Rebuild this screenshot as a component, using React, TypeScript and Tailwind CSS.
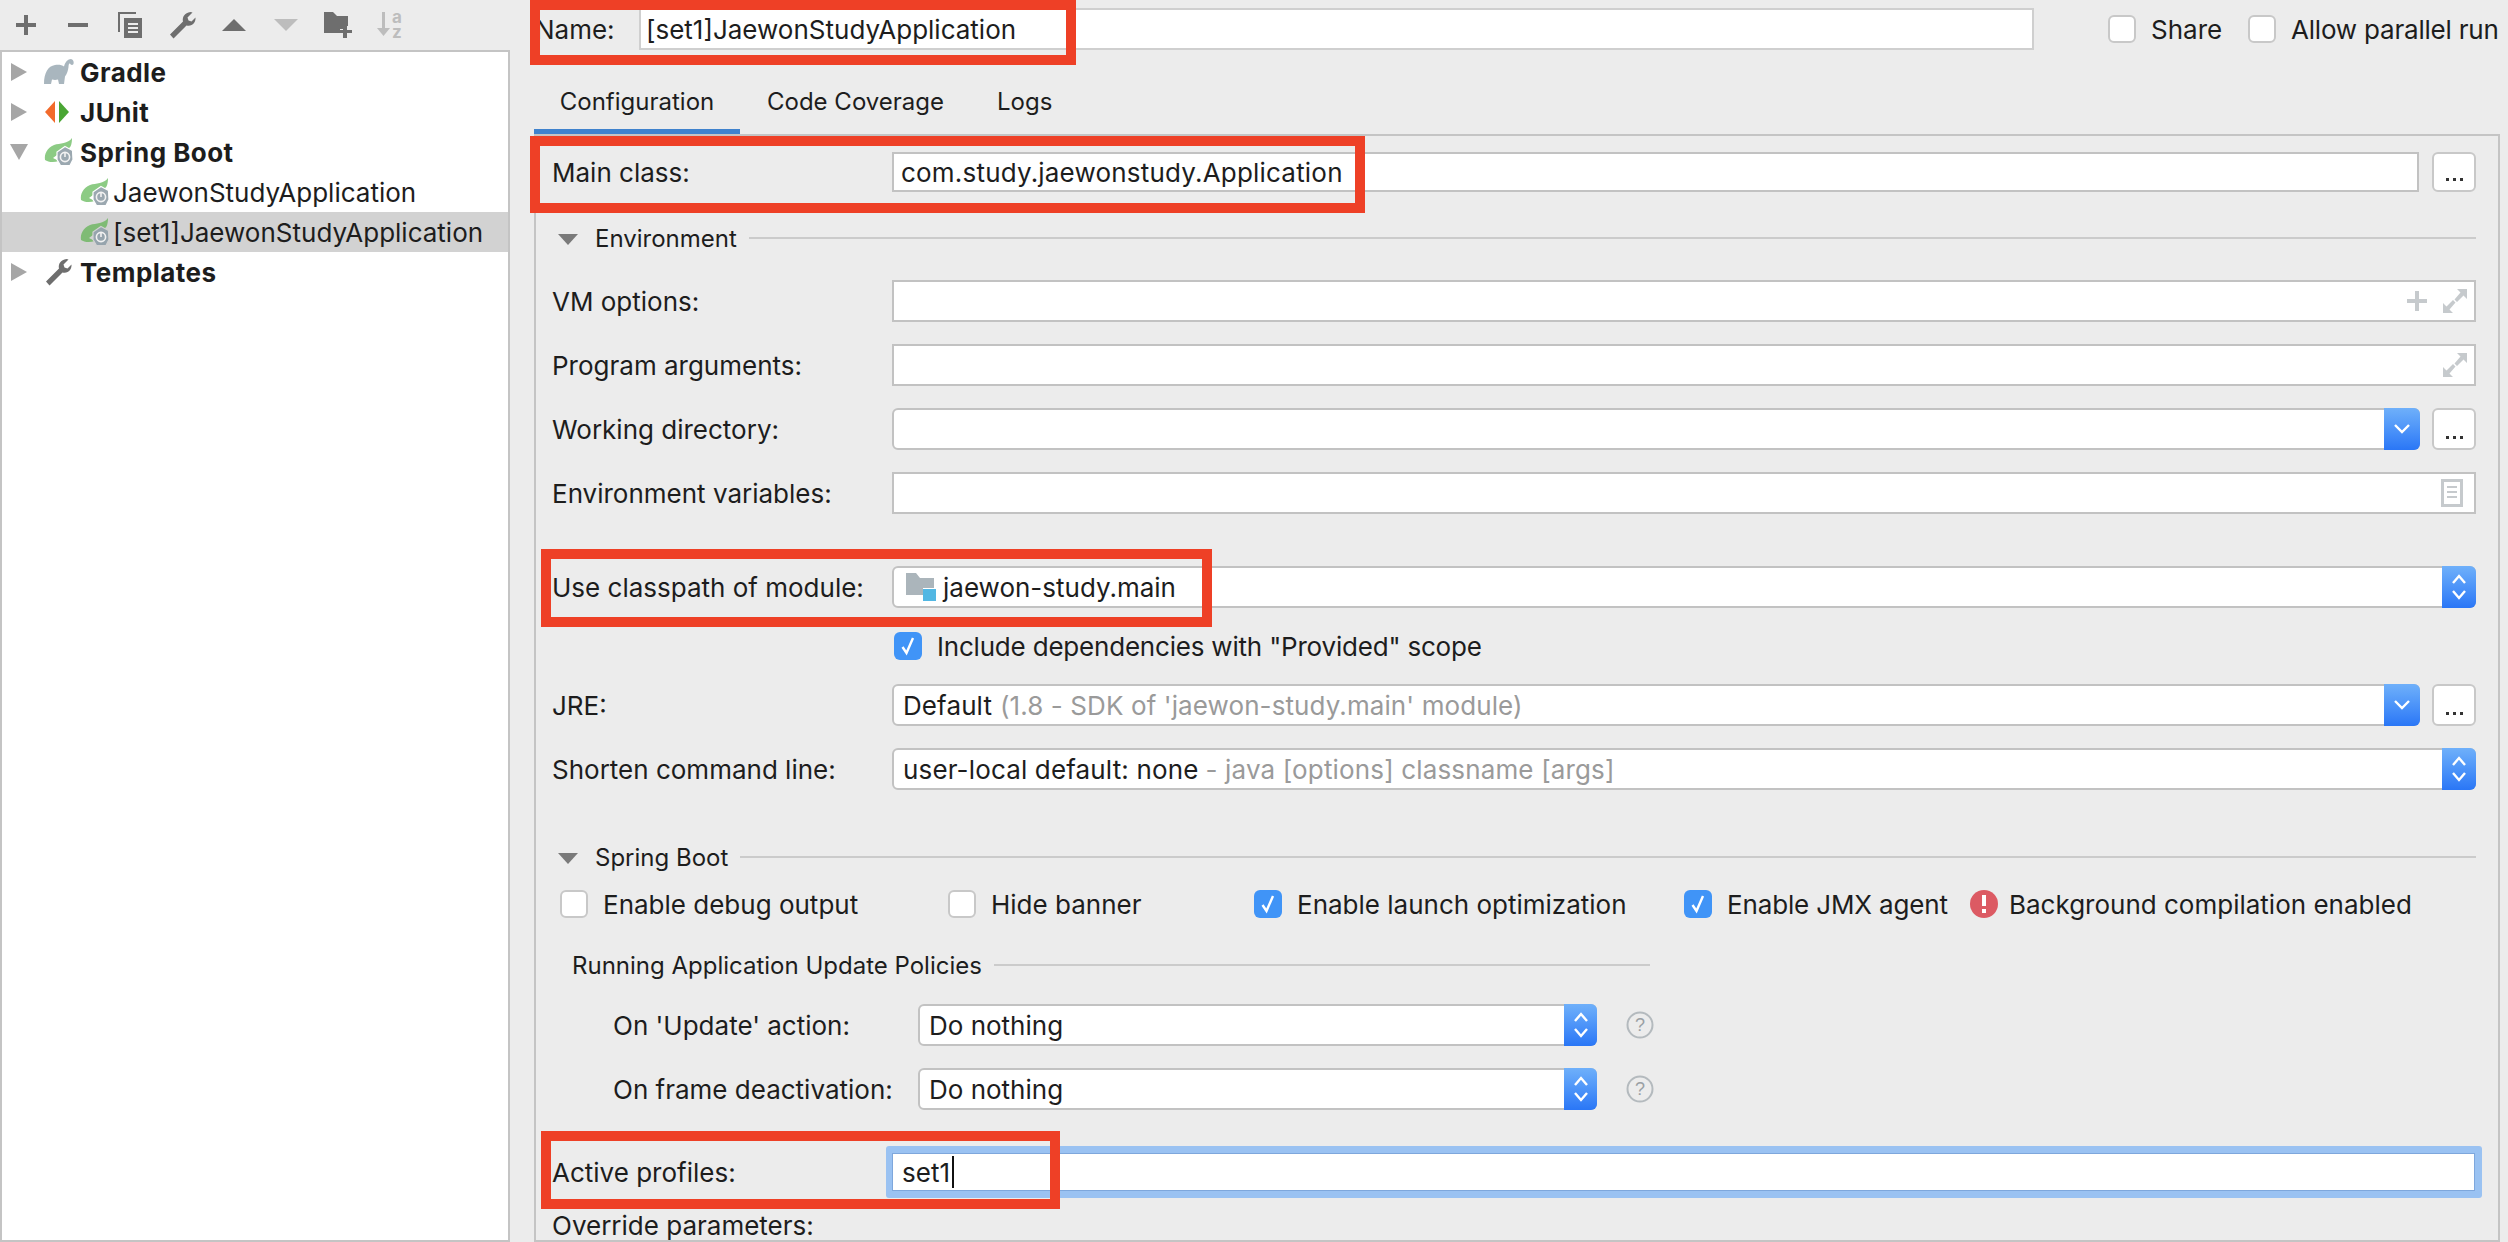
import React from "react";

const Wrench = ({ c = "#6e6e6e", s = 28 }: { c?: string; s?: number }) => (
  <svg width={s} height={s} viewBox="0 0 28 28">
    <path fill={c} d="M2 23.5 L15 10.5 C14 6.5 16.5 1.5 22.5 1 L24.5 1.5 L19.5 6.5 L20.5 9.5 L23.5 10.5 L27.5 6.5 C28 11.5 24 16 18.5 14.5 L5.5 27.5 Z" />
  </svg>
);

const Leaf = ({ dark = false }: { dark?: boolean }) => (
  <svg width="30" height="30" viewBox="0 0 30 30">
    <path fill={dark ? "#7fbb75" : "#8ccb84"} d="M28 1 C28 6 27 10 25 11 C20 12 15 14 13 18 L9 21 L15 24 C9 26 4 25 1 23 C0 17 3 11 10 8 C16 6 24 7 28 1 Z" />
    <path fill={dark ? "#96a4ad" : "#9ba8b0"} stroke={dark ? "#d2d2d2" : "#ffffff"} strokeWidth="1.2" d="M21 9.5 L28.5 13.5 L29 22.5 L26 28.5 L16.5 28.5 L13 22.5 L13 15 Z" />
    <circle cx="21" cy="20" r="4.6" fill="none" stroke="#f2f2f2" strokeWidth="1.6" />
    <path d="M21 15 V20" stroke="#f2f2f2" strokeWidth="1.6" />
  </svg>
);

const Elephant = () => (
  <svg width="30" height="26" viewBox="0 0 30 26">
    <path fill="#a9b6be" d="M0 25 C0 14 4 7 11 6 C15 5.5 18 6 20 7.5 C21 3 24 0 27 0 C29.5 0.5 30 3 29.5 5 C28.5 6.5 26.5 6 26 4.5 C25 4 24.5 6 24.5 8 C24 12 23 15 21 17.5 L20 25 L15 25 L14 20.5 C12 21 10 21 8 20.5 L7 25 L2.5 25 Z" />
  </svg>
);

const JUnit = () => (
  <svg width="26" height="24" viewBox="0 0 26 24">
    <path fill="#f26a2b" d="M11 1 V23 L1 12 Z" />
    <path fill="#4aa634" d="M15 1 V23 L25 12 Z" />
  </svg>
);

const Arrow = ({ open = false }: { open?: boolean }) => (
  <svg width="18" height="18" viewBox="0 0 18 18" className="shrink-0">
    {open ? <path fill="#a6a6a6" d="M0 1 H18 L9 17 Z" /> : <path fill="#a6a6a6" d="M1 0 L17 9 L1 18 Z" />}
  </svg>
);

const tb = "w-[52px] h-full flex items-center justify-center";

const Toolbar = () => (
  <div className="h-[50px] flex items-center">
    <div className={tb}>
      <svg width="20" height="20" viewBox="0 0 20 20"><path fill="#6e6e6e" d="M8 0 H12 V8 H20 V12 H12 V20 H8 V12 H0 V8 H8 Z" /></svg>
    </div>
    <div className={tb}>
      <svg width="20" height="4" viewBox="0 0 20 4"><path fill="#6e6e6e" d="M0 0 H20 V4 H0 Z" /></svg>
    </div>
    <div className={tb}>
      <svg width="24" height="26" viewBox="0 0 24 26">
        <path fill="#6e6e6e" d="M0 0 H18 V2 H2 V20 H0 Z" />
        <path fill="#6e6e6e" d="M6 6 H24 V26 H6 Z" />
        <path fill="#ececec" d="M10 11 H20 V13 H10 Z M10 15 H20 V17 H10 Z M10 19 H20 V21 H10 Z" />
      </svg>
    </div>
    <div className={tb}><Wrench /></div>
    <div className={tb}>
      <svg width="24" height="12" viewBox="0 0 24 12"><path fill="#6e6e6e" d="M12 0 L24 12 H0 Z" /></svg>
    </div>
    <div className={tb}>
      <svg width="24" height="12" viewBox="0 0 24 12"><path fill="#bdbdbd" d="M0 0 H24 L12 12 Z" /></svg>
    </div>
    <div className={tb}>
      <svg width="28" height="26" viewBox="0 0 28 26">
        <path fill="#6e6e6e" d="M0 0 H9 L13 4 H24 V14 H20 V17 H16 V21 H0 Z" />
        <path fill="#6e6e6e" d="M19 14 H23 V18 H28 V21 H23 V26 H19 V21 H16 V18 H19 Z" />
      </svg>
    </div>
    <div className={tb}>
      <svg width="32" height="40" viewBox="0 -7 32 40" className="-my-[7px] -mr-[4px]">
        <path fill="#bdbdbd" d="M6 0 H9 V16 L14 16 L7.5 24 L1 16 L6 16 Z" />
        <text x="16" y="11" fontSize="17" fontWeight="700" fill="#bdbdbd" fontFamily="Inter, sans-serif">a</text>
        <text x="16" y="26" fontSize="17" fontWeight="700" fill="#bdbdbd" fontFamily="Inter, sans-serif">z</text>
      </svg>
    </div>
  </div>
);

const TreeRow = ({
  icon,
  label,
  bold = false,
  child = false,
  open = false,
  selected = false,
}: {
  icon: React.ReactNode;
  label: string;
  bold?: boolean;
  child?: boolean;
  open?: boolean;
  selected?: boolean;
}) => (
  <div className={`h-10 flex items-center ${selected ? "bg-[#d2d2d2]" : ""}`}>
    {child ? (
      <div className="w-[78px] shrink-0" />
    ) : (
      <div className="w-[42px] shrink-0 flex pl-2">
        <Arrow open={open} />
      </div>
    )}
    <div className={`${child ? "w-[33px]" : "w-[36px]"} shrink-0 flex items-center`}>{icon}</div>
    <span className={bold ? "font-bold tracking-[0.45px]" : ""}>{label}</span>
  </div>
);

const Box = ({ className = "", children }: { className?: string; children?: React.ReactNode }) => (
  <div className={`bg-white border-2 border-[#c2c2c2] flex items-center px-[7px] min-w-0 ${className}`}>{children}</div>
);

const Dots = () => (
  <div className="w-[44px] h-full shrink-0 bg-white border-2 border-[#c8c8c8] rounded-md flex items-end justify-center pb-[9px] gap-[4px]">
    <i className="w-[3px] h-[3px] bg-[#333]" />
    <i className="w-[3px] h-[3px] bg-[#333]" />
    <i className="w-[3px] h-[3px] bg-[#333]" />
  </div>
);

const BlueBtn = ({ w, spin = false }: { w: string; spin?: boolean }) => (
  <div className={`${w} -my-[2px] -mr-[2px] ml-auto self-stretch shrink-0 rounded-r-md bg-gradient-to-b from-[#6fb0fa] to-[#2a76f6] flex items-center justify-center`}>
    {spin ? (
      <svg width="16" height="28" viewBox="0 0 16 28" fill="none" stroke="#fff" strokeWidth="2.4">
        <path d="M2 10 L8 3 L14 10 M2 18 L8 25 L14 18" />
      </svg>
    ) : (
      <svg width="16" height="10" viewBox="0 0 16 10" fill="none" stroke="#fff" strokeWidth="2.4">
        <path d="M1 1 L8 8 L15 1" />
      </svg>
    )}
  </div>
);

const Combo = ({ children, btn, spin = false, className = "" }: { children?: React.ReactNode; btn: string; spin?: boolean; className?: string }) => (
  <Box className={`rounded-md pr-0 pl-[9px] ${className}`}>
    {children}
    <BlueBtn w={btn} spin={spin} />
  </Box>
);

const Check = ({ on = false }: { on?: boolean }) =>
  on ? (
    <div className="w-7 h-7 shrink-0 rounded-md bg-[#4094f7] flex items-center justify-center">
      <svg width="16" height="20" viewBox="0 0 16 20" fill="none" stroke="#fff" strokeWidth="2.4">
        <path d="M2.5 11 L6.5 17 L13 2" />
      </svg>
    </div>
  ) : (
    <div className="w-7 h-7 shrink-0 rounded-md bg-white border-2 border-[#c8c8c8]" />
  );

const Expand = () => (
  <svg width="24" height="24" viewBox="0 0 24 24">
    <path fill="#c6cacd" d="M14 0 H24 V10 L20.5 6.5 L14 13 L11.5 10.5 L17.5 3.5 Z M0 14 L3.5 17.5 L10 11 L12.5 13.5 L6.5 20.5 L10 24 H0 Z" />
  </svg>
);

const Section = ({ label, className = "", tri = true }: { label: string; className?: string; tri?: boolean }) => (
  <div className={`h-5 flex items-center ${className}`}>
    {tri && (
      <svg width="20" height="11" viewBox="0 0 20 11" className="ml-[5px] mr-[17px] shrink-0">
        <path fill="#7a7a7a" d="M0 0 H20 L10 11 Z" />
      </svg>
    )}
    <span className="whitespace-nowrap text-[24px]">{label}</span>
    <div className="h-[2px] bg-[#cbcbcb] ml-3 flex-1 -translate-y-[1px]" />
  </div>
);

const Row = ({ label, children, className = "", h = "h-[42px]" }: { label: string; children?: React.ReactNode; className?: string; h?: string }) => (
  <div className={`${h} flex items-center ${className}`}>
    <div className="w-[340px] -ml-px shrink-0 whitespace-nowrap">{label}</div>
    {children}
  </div>
);

const Help = () => (
  <svg width="28" height="28" viewBox="0 0 28 28" className="ml-[29px] shrink-0">
    <circle cx="14" cy="14" r="12.5" fill="#ececec" stroke="#b4babe" strokeWidth="2" />
    <text x="14" y="20" textAnchor="middle" fontSize="18" fill="#9aa0a4" fontFamily="'Liberation Sans', sans-serif">?</text>
  </svg>
);

const CheckText = ({ on = false, label, className = "" }: { on?: boolean; label: string; className?: string }) => (
  <div className={`h-7 flex items-center gap-[15px] whitespace-nowrap ${className}`}>
    <Check on={on} />
    <span>{label}</span>
  </div>
);

const Red = ({ className }: { className: string }) => <div className={`absolute border-[10px] border-[#ee4026] ${className}`} />;

export default function App() {
  return (
    <div
      className="relative w-[2508px] h-[1242px] overflow-hidden bg-[#ececec] flex text-[#1d1d1d] text-[26px]"
      style={{ fontFamily: "Inter, 'Liberation Sans', Arial, sans-serif" }}
    >
      {/* left */}
      <div className="w-[510px] shrink-0 flex flex-col">
        <Toolbar />
        <div className="flex-1 bg-white border-2 border-[#c4c4c4]">
          <TreeRow icon={<Elephant />} label="Gradle" bold />
          <TreeRow icon={<JUnit />} label="JUnit" bold />
          <TreeRow icon={<Leaf />} label="Spring Boot" bold open />
          <TreeRow icon={<Leaf />} label="JaewonStudyApplication" child />
          <TreeRow icon={<Leaf dark />} label="[set1]JaewonStudyApplication" child selected />
          <TreeRow icon={<Wrench />} label="Templates" bold />
        </div>
      </div>

      {/* right */}
      <div className="flex-1 flex flex-col min-w-0 pl-6 pr-2">
        <div className="h-[42px] mt-2 shrink-0 flex items-center">
          <span className="w-[105px] shrink-0 pl-px">Name:</span>
          <Box className="w-[1395px] shrink-0 h-full border-[#cfcfcf] pl-[5px]">[set1]JaewonStudyApplication</Box>
          <CheckText label="Share" className="ml-[74px] w-[140px] shrink-0" />
          <CheckText label="Allow parallel run" className="shrink-0 tracking-[-0.2px]" />
        </div>

        <div className="h-[84px] shrink-0 flex items-stretch text-[24px]">
          <div className="w-[206px] pt-[37px] text-center border-b-[5px] border-[#3f82cd] leading-[30px]">Configuration</div>
          <div className="pl-[27px] pt-[37px] leading-[30px]">Code Coverage</div>
          <div className="pl-[53px] pt-[37px] leading-[30px]">Logs</div>
        </div>

        <div className="flex-1 border-2 border-[#c4c4c4] pt-4 pl-[17px] pr-[22px]">
          <Row label="Main class:" h="h-10">
            <Box className="flex-1 h-full tracking-[0.2px]">com.study.jaewonstudy.Application</Box>
            <div className="ml-[13px] h-full"><Dots /></div>
          </Row>

          <Section label="Environment" className="mt-[37px]" />

          <Row label="VM options:" className="mt-[31px]">
            <Box className="flex-1 h-full justify-end pr-[7px]">
              <svg width="20" height="20" viewBox="0 0 20 20" className="mr-4"><path fill="#c6cacd" d="M8 0 H12 V8 H20 V12 H12 V20 H8 V12 H0 V8 H8 Z" /></svg>
              <Expand />
            </Box>
          </Row>
          <Row label="Program arguments:" className="mt-[22px]">
            <Box className="flex-1 h-full justify-end pr-[7px]"><Expand /></Box>
          </Row>
          <Row label="Working directory:" className="mt-[22px]">
            <Combo btn="w-[36px]" className="flex-1 h-full" />
            <div className="ml-[12px] h-full"><Dots /></div>
          </Row>
          <Row label="Environment variables:" className="mt-[22px]">
            <Box className="flex-1 h-full justify-end pr-[11px]">
              <svg width="22" height="28" viewBox="0 0 22 28">
                <path fill="#c6cacd" d="M0 0 H22 V28 H0 Z" />
                <path fill="#fff" d="M3 3 H19 V25 H3 Z" />
                <path fill="#c6cacd" d="M6 7 H16 V9 H6 Z M6 12 H16 V14 H6 Z M6 17 H16 V19 H6 Z" />
              </svg>
            </Box>
          </Row>

          <Row label="Use classpath of module:" className="mt-[52px]">
            <Combo btn="w-[34px]" spin className="flex-1 h-full">
              <svg width="30" height="28" viewBox="0 0 30 28" className="ml-[3px] shrink-0">
                <path fill="#abb5bb" d="M0 0 H10 L14 5 H28 V15 H17 V22 H0 Z" />
                <path fill="#52b7e3" d="M17 16 H30 V28 H17 Z" />
              </svg>
              <span className="ml-[7px]">jaewon-study.main</span>
            </Combo>
          </Row>

          <div className="mt-6 ml-[341px]">
            <CheckText on label='Include dependencies with "Provided" scope' className="tracking-[-0.2px]" />
          </div>

          <Row label="JRE:" className="mt-6">
            <Combo btn="w-[36px]" className="flex-1 h-full tracking-[0.1px]">
              <span>Default</span>
              <span className="ml-[8px] text-[#9a9a9a]">(1.8 - SDK of 'jaewon-study.main' module)</span>
            </Combo>
            <div className="ml-[12px] h-full"><Dots /></div>
          </Row>
          <Row label="Shorten command line:" className="mt-[22px]">
            <Combo btn="w-[34px]" spin className="flex-1 h-full tracking-[0.15px]">
              <span>user-local default: none</span>
              <span className="ml-[7px] text-[#9a9a9a]">- java [options] classname [args]</span>
            </Combo>
          </Row>

          <Section label="Spring Boot" className="mt-[58px]" />

          <div className="mt-[22px] h-7 flex items-center pl-[7px]">
            <CheckText label="Enable debug output" className="w-[388px]" />
            <CheckText label="Hide banner" className="w-[306px]" />
            <CheckText on label="Enable launch optimization" className="w-[430px]" />
            <CheckText on label="Enable JMX agent" className="w-[286px] tracking-[-0.15px]" />
            <div className="flex items-center gap-[11px] whitespace-nowrap">
              <svg width="28" height="28" viewBox="0 0 28 28" className="shrink-0">
                <circle cx="14" cy="14" r="14" fill="#dc5a63" />
                <path fill="#fff" d="M12 5 H16 V16 H12 Z M12 19 H16 V23 H12 Z" />
              </svg>
              <span>Background compilation enabled</span>
            </div>
          </div>

          <div className="w-[1078px] ml-[19px] mt-[38px]">
            <Section label="Running Application Update Policies" tri={false} />
          </div>

          <div className="mt-7 h-[42px] flex items-center pl-[60px]">
            <div className="w-[305px] shrink-0">On 'Update' action:</div>
            <Combo btn="w-[33px]" spin className="w-[679px] h-full">Do nothing</Combo>
            <Help />
          </div>
          <div className="mt-[22px] h-[42px] flex items-center pl-[60px]">
            <div className="w-[305px] shrink-0">On frame deactivation:</div>
            <Combo btn="w-[33px]" spin className="w-[679px] h-full">Do nothing</Combo>
            <Help />
          </div>

          <div className="mt-9 h-[52px] flex items-center">
            <div className="w-[334px] -ml-px shrink-0">Active profiles:</div>
            <div className="flex-1 -mr-[6px] h-full rounded-[3px] bg-[#9ac2f2] p-[7px] pl-[6px]">
              <div className="h-full bg-white border border-[#7ea7dc] flex items-center pl-[9px]">
                set1
                <span className="w-[2px] h-8 bg-[#111] ml-[2px]" />
              </div>
            </div>
          </div>
          <div className="mt-[17px] -ml-px h-5 flex items-center whitespace-nowrap">Override parameters:</div>
        </div>
      </div>

      {/* annotation rectangles over the form */}
      <Red className="left-[530px] top-0 w-[546px] h-[65px]" />
      <Red className="left-[530px] top-[136px] w-[835px] h-[77px]" />
      <Red className="left-[541px] top-[549px] w-[671px] h-[78px]" />
      <Red className="left-[541px] top-[1131px] w-[519px] h-[78px]" />
    </div>
  );
}
